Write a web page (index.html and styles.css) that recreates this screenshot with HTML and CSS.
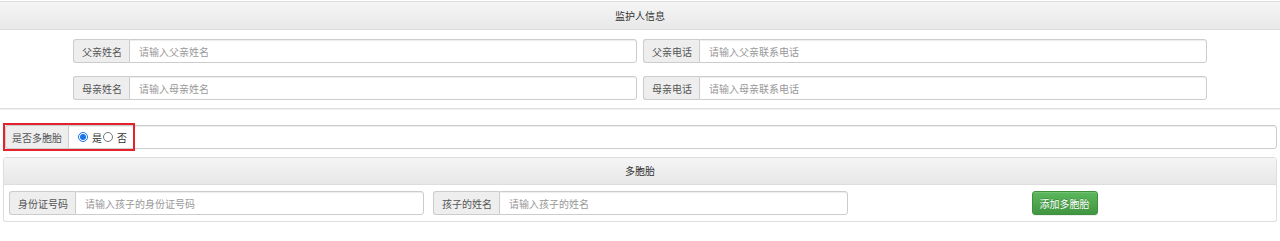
FILE: index.html
```html
<!DOCTYPE html>
<html lang="zh-CN">
<head>
<meta charset="utf-8">
<title>监护人信息</title>
<link rel="stylesheet" href="styles.css">
</head>
<body>
<div class="page">
  <section class="panel panel-wide">
    <div class="panel-heading">监护人信息</div>
    <div class="panel-body guardian">
      <div class="input-group">
        <span class="addon">父亲姓名</span>
        <input class="control" type="text" placeholder="请输入父亲姓名">
      </div>
      <div class="input-group">
        <span class="addon">父亲电话</span>
        <input class="control" type="text" placeholder="请输入父亲联系电话">
      </div>
      <div class="input-group">
        <span class="addon">母亲姓名</span>
        <input class="control" type="text" placeholder="请输入母亲姓名">
      </div>
      <div class="input-group">
        <span class="addon">母亲电话</span>
        <input class="control" type="text" placeholder="请输入母亲联系电话">
      </div>
    </div>
  </section>

  <div class="input-group multi">
    <span class="highlight"></span>
    <span class="addon">是否多胞胎</span>
    <div class="control radios">
      <label class="radio"><input type="radio" name="multi" checked><span>是</span></label>
      <label class="radio"><input type="radio" name="multi"><span>否</span></label>
    </div>
  </div>

  <section class="panel panel-boxed">
    <div class="panel-heading">多胞胎</div>
    <div class="panel-body twins">
      <div class="col">
        <div class="input-group">
          <span class="addon">身份证号码</span>
          <input class="control" type="text" placeholder="请输入孩子的身份证号码">
        </div>
      </div>
      <div class="col">
        <div class="input-group">
          <span class="addon">孩子的姓名</span>
          <input class="control" type="text" placeholder="请输入孩子的姓名">
        </div>
      </div>
      <div class="col col-center">
        <button class="btn-success" type="button">添加多胞胎</button>
      </div>
    </div>
  </section>
</div>
</body>
</html>
```

FILE: styles.css
```css
* { box-sizing: border-box; }

html, body {
  margin: 0;
  padding: 0;
  background: #fff;
}

body {
  font-family: "Noto Sans CJK SC", "Liberation Sans", sans-serif;
  font-size: 10px;
  color: #333;
}

.page {
  padding-top: 1px;
}

.panel {
  background: #fff;
  border: 1px solid #ddd;
  box-shadow: 0 1px 1px rgba(0, 0, 0, 0.05);
}

.panel-wide {
  border-left: 0;
  border-right: 0;
}

.panel-boxed {
  margin: 8px 3px 0 3px;
  border-radius: 3px;
}

.panel-heading {
  height: 28px;
  line-height: 27px;
  text-align: center;
  color: #333;
  background: linear-gradient(to bottom, #f5f5f5 0%, #e8e8e8 100%);
  border-bottom: 1px solid #ddd;
}

.panel-boxed .panel-heading {
  height: 27px;
  line-height: 26px;
}

.guardian {
  display: grid;
  grid-template-columns: 564px 564px;
  column-gap: 6px;
  row-gap: 13px;
  justify-content: center;
  padding: 9px 0 8px 0;
}

.input-group {
  display: flex;
  height: 24px;
  position: relative;
}

.addon {
  flex: none;
  display: flex;
  align-items: center;
  padding: 0 7px 0 8px;
  background: #eee;
  color: #555;
  border: 1px solid #ccc;
  border-right: 0;
  border-radius: 3px 0 0 3px;
  white-space: nowrap;
}

.control {
  flex: 1;
  min-width: 0;
  height: 24px;
  margin: 0;
  padding: 0 9px;
  font: inherit;
  color: #555;
  background: #fff;
  border: 1px solid #ccc;
  border-radius: 0 3px 3px 0;
  box-shadow: inset 0 1px 1px rgba(0, 0, 0, 0.075);
  outline: none;
}

.control::placeholder {
  color: #999;
}

.multi {
  margin: 16px 3px 0 5px;
}

.multi .addon {
  padding: 0 6px;
}

.highlight {
  position: absolute;
  left: -2px;
  top: -2px;
  width: 132px;
  height: 28px;
  border: 2px solid #e3232c;
  pointer-events: none;
  z-index: 2;
}

.radios {
  display: flex;
  align-items: center;
  padding: 0 0 0 9px;
}

.radio {
  display: flex;
  align-items: center;
  color: #333;
}

.radio input {
  width: 10px;
  height: 10px;
  margin: 0 4px 0 0;
  accent-color: #1a73e8;
}

.radio span {
  margin-right: 1px;
}

.twins {
  display: grid;
  grid-template-columns: 1fr 1fr 1fr;
  padding: 6px 0 6px 0;
}

.col {
  padding: 0 4px 0 5px;
}

.col-center {
  display: flex;
  justify-content: center;
}

.btn-success {
  width: 66px;
  height: 24px;
  padding: 0;
  font: inherit;
  color: #fff;
  background: linear-gradient(to bottom, #5cb85c 0%, #419641 100%);
  border: 1px solid #3e8f3e;
  border-radius: 3px;
  text-shadow: 0 -1px 0 rgba(0, 0, 0, 0.2);
  box-shadow: inset 0 1px 0 rgba(255, 255, 255, 0.15), 0 1px 1px rgba(0, 0, 0, 0.075);
}
```
